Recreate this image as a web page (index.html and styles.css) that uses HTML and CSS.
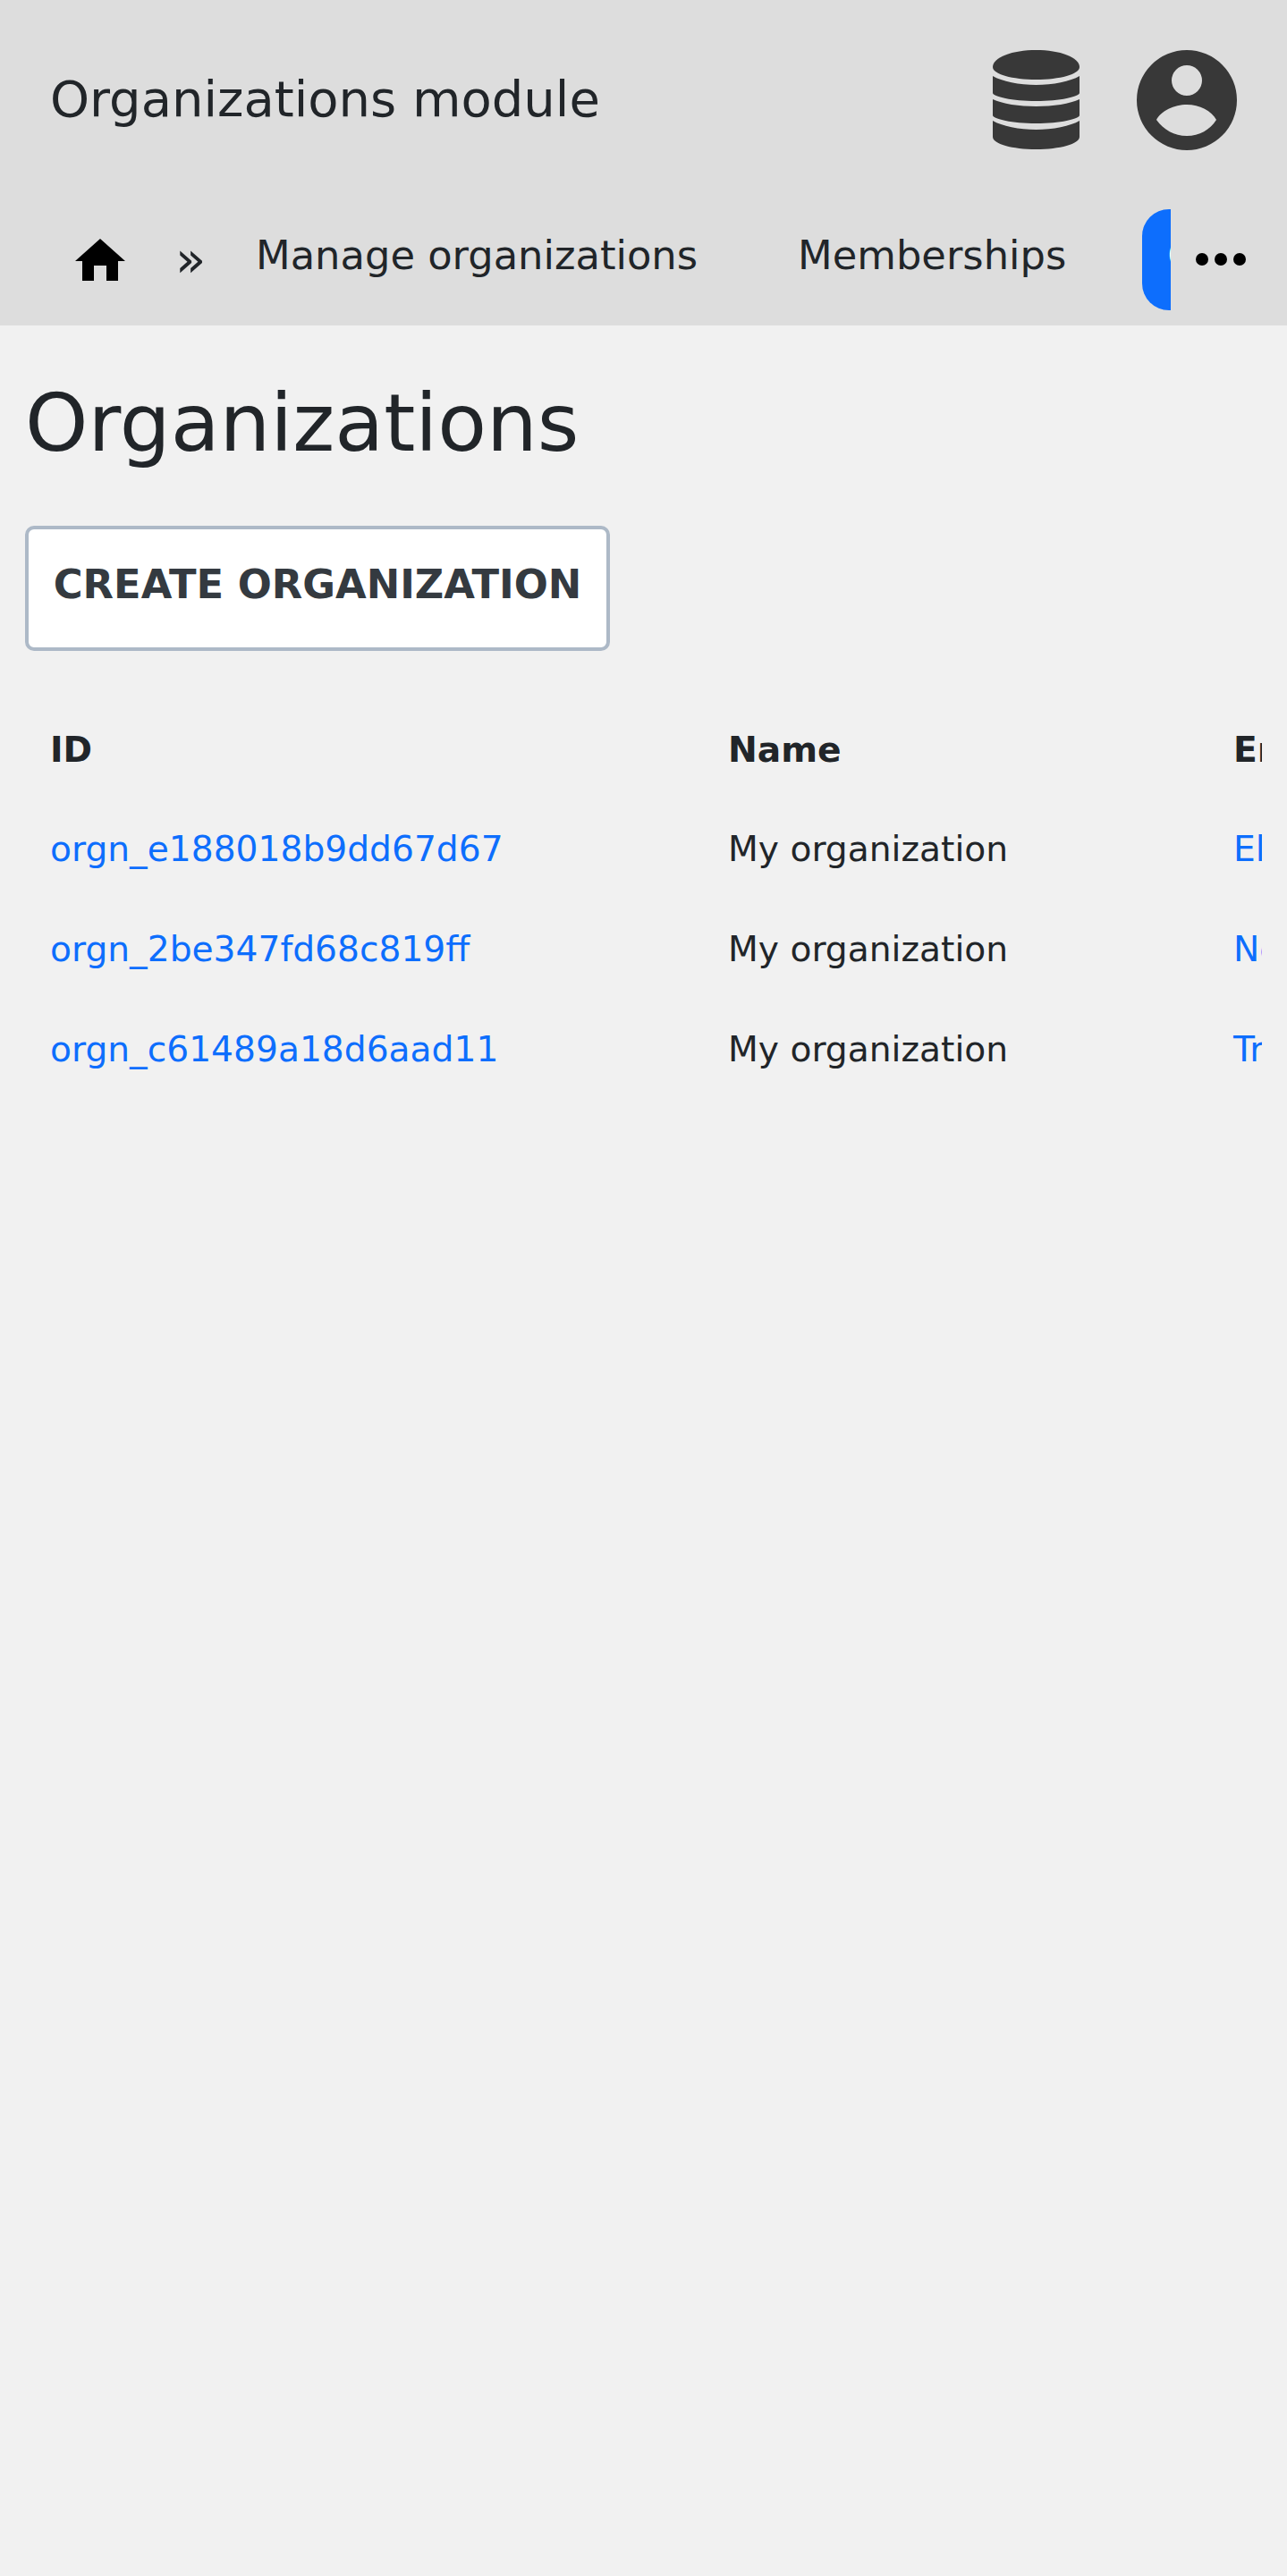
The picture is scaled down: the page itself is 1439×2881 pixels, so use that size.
FILE: index.html
```html
<!DOCTYPE html>
<html lang="en">
<head>
    <title>Organizations module</title>
    <meta charset="UTF-8">
    <link rel="stylesheet" href="styles.css">
</head>
<body>

    <header>
        <div class="topbar">
            <div class="module-title">Organizations module</div>
            <div class="top-icons">
                <svg class="icon-db" viewBox="0 0 97 111">
                    <path d="M0 19C0 8 22 0 48.500 0S97 8 97 19C97 27 75 33 48.500 33S0 27 0 19Z"/>
                    <path d="M0 29C10 35 30 39 48.500 39S87 35 97 29V48C97 52 75 57 48.500 57S0 52 0 48Z"/>
                    <path d="M0 55C10 60 30 63 48.500 63S87 60 97 55V73C97 77 75 82 48.500 82S0 77 0 73Z"/>
                    <path d="M0 79C10 85 30 89 48.500 89S87 85 97 79V97C97 105 75 111 48.500 111S0 105 0 97Z"/>
                </svg>
                <svg class="icon-user" viewBox="0 0 112 112">
                    <path fill-rule="evenodd" d="M56 0A56 56 0 1 1 56 112A56 56 0 1 1 56 0ZM56 17A17 17 0 1 0 56 51A17 17 0 1 0 56 17ZM22 78C30 89 42 96 56 96S82 89 89 78C84 68 70 61 56 61S27 68 22 78Z"/>
                </svg>
            </div>
        </div>
        <nav class="crumbs">
            <svg class="icon-home" viewBox="0 0 56 47">
                <path d="M28 0L56 25H48V47H35V30H21V47H8V25H0Z"/>
            </svg>
            <span class="sep">»</span>
            <div class="tabs">
                <a class="tab" href="#">Manage organizations</a>
                <a class="tab" href="#">Memberships</a>
                <a class="tab active" href="#">Organizations</a>
            </div>
            <div class="more"><i></i><i></i><i></i></div>
        </nav>
    </header>

    <main>
        <h1>Organizations</h1>
        <button class="create-btn" type="button">Create organization</button>
        <div class="table-wrap">
            <table>
                <thead>
                    <tr><th class="col-id">ID</th><th class="col-name">Name</th><th>Entitlements</th></tr>
                </thead>
                <tbody>
                    <tr><td><a href="#">orgn_e188018b9dd67d67</a></td><td>My organization</td><td><a href="#">Elite</a></td></tr>
                    <tr><td><a href="#">orgn_2be347fd68c819ff</a></td><td>My organization</td><td><a href="#">Network</a></td></tr>
                    <tr><td><a href="#">orgn_c61489a18d6aad11</a></td><td>My organization</td><td><a href="#">Trial</a></td></tr>
                </tbody>
            </table>
        </div>
    </main>

</body>
</html>
```

FILE: styles.css
```css
* {
    box-sizing: border-box;
}

html, body {
    margin: 0;
    height: 100%;
}

body {
    font-family: 'DejaVu Sans', sans-serif;
    font-size: 39.200px;
    color: #212529;
    background: #f1f1f1;
}

a {
    color: #0d6efd;
    text-decoration: none;
}

header {
    height: 364px;
    background: #dddddd;
}

.topbar {
    height: 222px;
    padding: 56px 56px 0 56px;
    display: flex;
    justify-content: space-between;
}

.module-title {
    font-size: 56px;
    line-height: 110px;
}

.top-icons {
    display: flex;
    gap: 64px;
}

.icon-db {
    width: 97px;
    height: 111px;
    fill: #383838;
}

.icon-user {
    width: 112px;
    height: 112px;
    fill: #383838;
}

.crumbs {
    height: 142px;
    padding: 12px 0 0 84px;
    display: flex;
    align-items: flex-start;
}

.icon-home {
    width: 56px;
    height: 47px;
    margin-top: 33px;
    fill: #000;
}

.sep {
    font-size: 56px;
    line-height: 112px;
    margin-left: 56px;
    width: 90px;
}

.tabs {
    flex: 0 0 1023px;
    height: 113px;
    display: flex;
    overflow: hidden;
}

.tab {
    flex: none;
    height: 113px;
    color: #212529;
    font-size: 44.800px;
    line-height: 104px;
    white-space: nowrap;
    margin-right: 112px;
}

.tab.active {
    padding: 0 28px;
    color: #fff;
    background: #0d6efd;
    border-radius: 30px;
    margin-left: -27px;
    margin-right: 0;
}

.more {
    margin: 49px 0 0 28px;
    display: flex;
    gap: 7px;
}

.more i {
    width: 14px;
    height: 14px;
    border-radius: 50%;
    background: #000;
}

main {
    padding: 0 28px;
}

h1 {
    margin: 0;
    padding-top: 56px;
    font-size: 89.600px;
    font-weight: 400;
    line-height: 106px;
}

.create-btn {
    display: block;
    margin-top: 62px;
    width: 654px;
    height: 140px;
    padding: 0 0 10px;
    font-family: inherit;
    font-size: 44.800px;
    font-weight: 700;
    text-transform: uppercase;
    color: #343a40;
    background: #fff;
    border: 4px solid #adb9c7;
    border-radius: 10px;
}

.table-wrap {
    margin-top: 54px;
    overflow: hidden;
}

table {
    border-collapse: collapse;
    table-layout: fixed;
    width: 1700px;
}

th, td {
    height: 112px;
    padding: 0 28px 2px 29px;
    text-align: left;
    white-space: nowrap;
}

th {
    padding-bottom: 0;
}

th:first-child, td:first-child {
    padding-left: 28px;
}

.col-id {
    width: 757px;
}

.col-name {
    width: 565px;
}
```
